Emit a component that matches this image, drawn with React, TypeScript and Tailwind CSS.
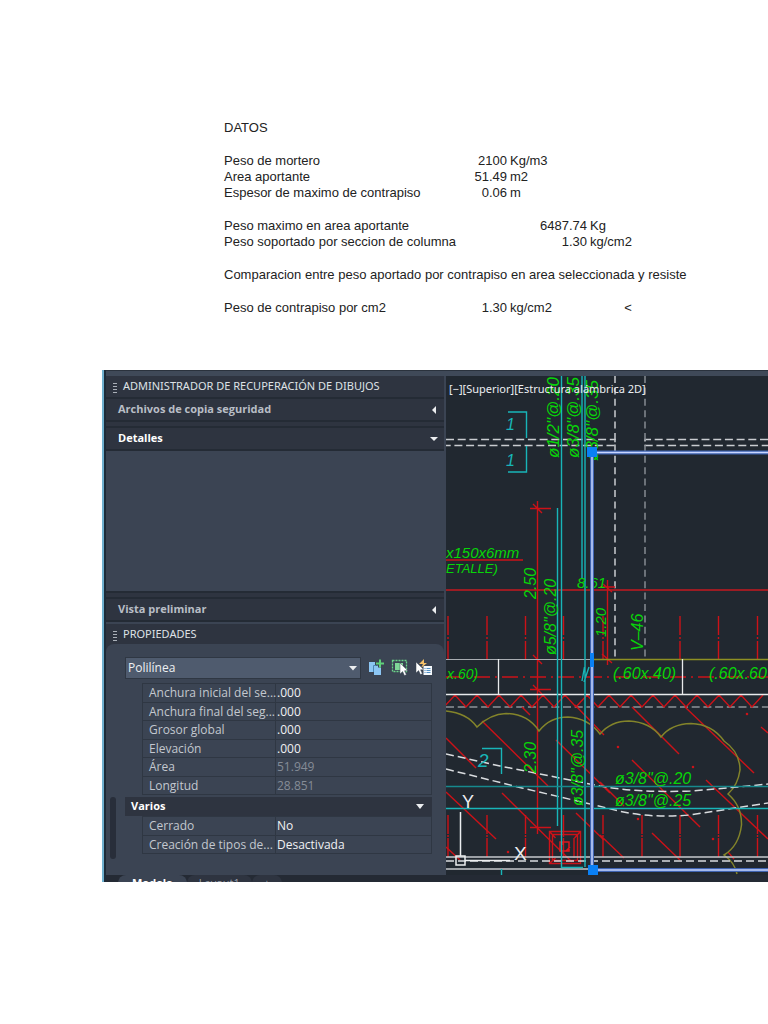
import type { ReactNode } from 'react';

type SheetRow = { label: string; a?: string; aUnit?: string; b?: string; bUnit?: string; wide?: boolean };

const sheet: (SheetRow | null)[] = [
    { label: 'DATOS' },
    null,
    { label: 'Peso de mortero', a: '2100', aUnit: 'Kg/m3' },
    { label: 'Area aportante', a: '51.49', aUnit: 'm2' },
    { label: 'Espesor de maximo de contrapiso', a: '0.06', aUnit: 'm' },
    null,
    { label: 'Peso maximo en area aportante', b: '6487.74', bUnit: 'Kg' },
    { label: 'Peso soportado por seccion de columna', b: '1.30', bUnit: 'kg/cm2' },
    null,
    { label: 'Comparacion entre peso aportado por contrapiso en area seleccionada y resiste', wide: true },
    null,
    { label: 'Peso de contrapiso por cm2', a: '1.30', aUnit: 'kg/cm2', bUnit: '<' },
];

const geometry = [
    { name: 'Anchura inicial del se...', value: '.000' },
    { name: 'Anchura final del seg...', value: '.000' },
    { name: 'Grosor global', value: '.000' },
    { name: 'Elevación', value: '.000' },
    { name: 'Área', value: '51.949', readOnly: true },
    { name: 'Longitud', value: '28.851', readOnly: true },
];

const misc = [
    { name: 'Cerrado', value: 'No' },
    { name: 'Creación de tipos de...', value: 'Desactivada' },
];

const Sheet = () => (
    <section className="pl-56 pr-[99px] pt-[120px] font-['Liberation_Sans',Arial,sans-serif] text-[13px] leading-4 text-[#222]">
        <table className="w-full table-fixed border-collapse whitespace-nowrap">
            <colgroup>
                <col />
                <col className="w-9" />
                <col className="w-20" />
                <col className="w-[82px]" />
            </colgroup>
            <tbody>
                {sheet.map((row, i) => {
                    if (!row) return <tr key={i} className="h-[17px]"><td colSpan={4} /></tr>;
                    if (row.wide) return <tr key={i}><td colSpan={4} className="p-0">{row.label}</td></tr>;
                    return (
                        <tr key={i}>
                            <td className="p-0">{row.label}</td>
                            <td className="p-0 text-right">{row.a}</td>
                            <td className="p-0">
                                <div className="flex justify-between pl-[3px]">
                                    <span>{row.aUnit}</span>
                                    <span>{row.b}</span>
                                </div>
                            </td>
                            <td className={row.bUnit === '<' ? 'p-0 text-center' : 'p-0 pl-[3px]'}>{row.bUnit}</td>
                        </tr>
                    );
                })}
            </tbody>
        </table>
    </section>
);

const PaletteTitle = ({ children }: { children: ReactNode }) => (
    <h2 className="flex h-5 items-center gap-1.5 bg-[#2e3440] pl-[7px] font-['Noto_Sans','Open_Sans',sans-serif] text-[11px] text-[#dfe2e6]">
        <svg width="4" height="10" stroke="#aab0b8" className="mt-1">
            <path d="M0 .5H4M0 3.5H4M0 6.5H4M0 9.5H4" />
        </svg>
        {children}
    </h2>
);

const Section = ({ title, open }: { title: string; open?: boolean }) => (
    <button
        type="button"
        aria-expanded={!!open}
        className={`flex h-[21px] w-full items-center justify-between bg-[#2e3440] pl-3 text-[11px] font-bold ${open ? 'pr-1.5 text-white' : 'pr-2 text-[#b9bec6]'}`}
    >
        {title}
        {open ? (
            <svg width="8" height="4" fill="#eceef0"><path d="M0 0h8L4 4z" /></svg>
        ) : (
            <svg width="4" height="8" fill="#eceef0"><path d="M4 0v8L0 4z" /></svg>
        )}
    </button>
);

const PropertyTable = ({ rows }: { rows: { name: string; value: string; readOnly?: boolean }[] }) => (
    <table className="w-full table-fixed border-collapse border border-[#2f3743] text-xs leading-4">
        <colgroup>
            <col className="w-[133px]" />
            <col />
        </colgroup>
        <tbody>
            {rows.map((r) => (
                <tr key={r.name} className="h-[18px] border-b border-[#2f3743] odd:h-[19px]">
                    <th className="whitespace-nowrap border-r border-[#2f3743] p-0 pl-1.5 text-left font-normal text-[#c3c8cf]">{r.name}</th>
                    <td className={r.readOnly ? 'p-0 pl-px text-[#858c97]' : 'p-0 pl-px text-[#f0f1f3]'}>{r.value}</td>
                </tr>
            ))}
        </tbody>
    </table>
);

const cursor = 'M0 0v11l2.6-2.4 1.8 4 2-.9-1.8-3.9H8z';

const Tools = () => (
    <div className="flex gap-1.5">
        <button type="button" aria-label="Alternar PICKADD">
            <svg width="18" height="18">
                <path d="M3 3h6v3h6v10H8v-3H3z" fill="#8cc6f4" />
                <path d="M7.5 13V6.5h4" fill="none" stroke="#4c87b5" />
                <path d="M14 .5v8M10 4.5h8" stroke="#3b4453" strokeWidth="4" />
                <path d="M14 .5v8M10 4.5h8" stroke="#5fd07b" strokeWidth="2" />
            </svg>
        </button>
        <button type="button" aria-label="Seleccionar objetos">
            <svg width="18" height="18">
                <rect x="2.5" y="1.5" width="14" height="11" fill="none" stroke="#6bd489" strokeWidth="1.3" strokeDasharray="2 1" />
                <path d="M5 4h8v7H5z" fill="#7fd697" />
                <path d={cursor} transform="translate(10 4)" fill="#fff" stroke="#3b4453" strokeWidth=".5" />
            </svg>
        </button>
        <button type="button" aria-label="Selección rápida">
            <svg width="18" height="18">
                <path d="M10 0 5 5h4l-2 4 6-5h-3z" fill="#f4c069" />
                <path d={cursor} transform="translate(2 3)" fill="#fff" stroke="#3b4453" strokeWidth=".5" />
                <path d="M9.500 7H18v9H9.500z" fill="#f5f8fb" />
                <path d="M10.500 9.500h1M12.500 9.500h4M10.500 11.500h1M12.500 11.500h4M10.500 13.500h1M12.500 13.500h4" stroke="#4f8fc4" />
            </svg>
        </button>
    </div>
);

const Palettes = () => (
    <aside className="flex w-[338px] shrink-0 flex-col font-['Open_Sans','Noto_Sans',sans-serif]">
        <div className="flex flex-col gap-0.5 bg-[#242b35] pb-0.5">
            <div className="bg-[#2e3440] pb-px"><PaletteTitle>ADMINISTRADOR DE RECUPERACIÓN DE DIBUJOS</PaletteTitle></div>
            <Section title="Archivos de copia seguridad" />
            <div className="h-1 bg-[#2e3440]" />
            <Section title="Detalles" open />
            <div className="h-[140px] bg-[#3b4453]" />
            <div className="h-1 bg-[#2e3440]" />
            <Section title="Vista preliminar" />
        </div>
        <div className="h-0.5 bg-[#3b4453]" />
        <PaletteTitle>PROPIEDADES</PaletteTitle>
        <div className="bg-[#2e3440]">
            <div className="flex h-[231px] items-end rounded-t-lg bg-[#3b4453] pb-4 pl-1">
                <div className="h-[62px] w-1.5 rounded bg-[#282e3a]" />
                <div className="flex h-full min-w-0 flex-1 flex-col pl-[9px] pr-3 pt-[13px]">
                    <div className="flex h-[22px] items-center justify-between">
                        <div className="relative">
                            <select aria-label="Tipo de objeto" className="block h-[22px] w-[236px] appearance-none border border-[#2f3743] bg-[#4f5b6e] px-0.5 text-xs text-[#eef0f2]">
                                <option>Polilínea</option>
                            </select>
                            <svg width="8" height="5" fill="#eceef0" className="pointer-events-none absolute right-1 top-[9px]"><path d="M0 0h8L4 4.5z" /></svg>
                        </div>
                        <Tools />
                    </div>
                    <div className="pl-[17px] pt-1"><PropertyTable rows={geometry} /></div>
                    <button type="button" aria-expanded="true" className="mt-0.5 flex h-[19px] w-full shrink-0 items-center justify-between bg-[#2e3440] pl-1.5 pr-2 text-[11px] font-bold text-white">
                        Varios
                        <svg width="8" height="5" fill="#eceef0"><path d="M0 0h8L4 5z" /></svg>
                    </button>
                    <div className="pl-[17px]"><PropertyTable rows={misc} /></div>
                </div>
            </div>
        </div>
    </aside>
);

type LabelProps = { x: number; y: number; size?: number; up?: boolean; children: ReactNode };

const Label = ({ x, y, size = 16, up, children }: LabelProps) => (
    <text x={x} y={y} fontSize={size} transform={up ? `rotate(-90 ${x} ${y})` : undefined}>{children}</text>
);

const rebarX = [448, 487, 525.5, 563.5, 603, 642, 680, 718.5, 757.5];

const hatch = [
    [446, 738, 476, 768], [482, 721, 548, 786], [556, 740, 610, 793], [446, 792, 496, 839], [502, 793, 572, 862],
    [576, 813, 604, 840], [446, 847, 460, 860], [522, 707, 530, 715], [575, 705, 604, 735], [632, 707, 679, 754],
    [685, 707, 754, 773], [600, 782, 624, 806], [632, 760, 700, 827], [600, 835, 624, 858], [652, 833, 680, 860],
    [706, 780, 768, 839], [761, 727, 768, 733], [728, 852, 734, 859],
];

const dots = [[618, 747], [693, 767], [747, 714], [713, 839], [638, 819], [508, 852]];

const zigzag = Array.from({ length: 30 }, (_, i) => `${444 + i * 11} ${i % 2 ? 695 : 707}`).join(' ');

const Drawing = () => (
    <svg
        viewBox="446 376 322 499"
        preserveAspectRatio="xMinYMin slice"
        className="block h-[499px] w-full bg-[#212830] font-['Liberation_Sans',Arial,sans-serif]"
        fill="none"
    >
        {/* beams and axes */}
        <g stroke="#c9ccd0" strokeWidth="1.5">
            <path d="M446 439.5H615V445.5H446M768 439.5H645V445.5H768" strokeDasharray="8 3.7" />
            <path d="M615 376V659" strokeDasharray="7 4.4" />
            <path d="M645 376V659" stroke="#858a91" strokeDasharray="7 4.4" />
            <path d="M446 707H768" stroke="#8d9298" strokeDasharray="8 3.7" />
        </g>

        {/* red hatch, rebar and dimensions */}
        <g stroke="#cc1218" strokeWidth="1.4">
            <path d="M446 590H768" stroke="#9c1c23" strokeWidth="2.2" />
            <path d="M446 560H523M537.5 501V834M530 508.5H551M530 689.5H551M530 827.5H551M533 504l9 9M533 685l9 9M533 655l9 9M607.5 580V665M602 654l10 9M600 587h15M603 584l9 8" />
            <path d="M446 677H768" strokeDasharray="16 5 2 5" />
            <polyline points={zigzag} />
            {rebarX.filter((x) => x !== 642).map((x) => (
                <path key={x} d={`M${x} 616V635M${x} 637V639M${x} 641V659`} />
            ))}
            {rebarX.map((x) => (
                <path key={x} d={`M${x} 815V834M${x} 835V837M${x} 838V857`} />
            ))}
            {hatch.map(([x1, y1, x2, y2], i) => (
                <line key={i} x1={x1} y1={y1} x2={x2} y2={y2} />
            ))}
            {dots.map(([x, y]) => <circle key={x} cx={x} cy={y} r=".6" />)}
            <path d="M549.5 831.5h31v32h-31zM552.5 834.5h25v26h-25zM549.5 831.5l6 6.5M580.5 831.5l-6 6.5M549.5 863.5l6-5.5M574 838v20" />
            <path d="M560 842h9v9h-9zM563 845v-3M566 851l4-4" strokeWidth="1.5" stroke="#e0161c" />
        </g>

        {/* slab edges */}
        <path d="M446 659.5H594" stroke="#a9adb2" />
        <path d="M594 659.5H768" stroke="#8f9023" strokeWidth="1.5" />
        <path d="M446 694.5H768M498.5 659V694M682.5 659V694" stroke="#e8eaec" strokeWidth="1.3" />
        <path
            d="M446 711Q467 713 477 727Q490 714 506 713.5Q528 714 539 731Q550 717 568 717Q588 718 600 734Q611 721 629 721Q650 722 661 737Q671 724 691 723.5Q712 724 724 741Q740 752 740 770Q738 785 728 794Q742 806 741.5 825Q739 846 724 855Q735 863 737 874"
            stroke="#83842a"
            strokeWidth="1.5"
        />
        <g stroke="#d9dcdf" strokeWidth="1.5" strokeDasharray="8 4">
            <path d="M446 754L500 766L600 786Q640 793 690 791Q740 787 768 784" />
            <path d="M446 769L522 788L607 808Q645 819 690 815Q735 808 768 803" />
            <path d="M446 861H768" />
        </g>
        <path d="M446 857H768M446 869H590" stroke="#c5c8cc" strokeWidth="1.5" />

        {/* cyan reinforcement */}
        <g stroke="#18b5b8" strokeWidth="1.4">
            <path d="M561.5 376V867.5H583M557.5 508V826M582 376V578M585 376V867M584.5 667L582 681M589 667L584 682" />
            <path d="M508 412H526.5V438M508 472H526.5V446M482 748.5H501.5V774M501.5 869V875" />
            <path d="M446 786.5H768" stroke="#17898d" strokeWidth="1.5" />
            <path d="M446 808.5H768" />
        </g>
        <g fill="#18b5b8" fontStyle="italic">
            <Label x={506} y={430}>1</Label>
            <Label x={506} y={466}>1</Label>
            <Label x={478} y={767} size={19}>2</Label>
        </g>

        {/* annotations */}
        <g fill="#08d508" fontStyle="italic">
            <Label x={559} y={458} size={17} up>ø1/2"@.20</Label>
            <Label x={579} y={458} size={17} up>ø3/8"@.35</Label>
            <Label x={598} y={461} size={17} up>ø3/8"@.35</Label>
            <Label x={556} y={655} up>ø5/8"@.20</Label>
            <Label x={583} y={806} up>ø3/8"@.35</Label>
            <Label x={536} y={599} up>2.50</Label>
            <Label x={536} y={773} up>2.30</Label>
            <Label x={606} y={637} size={15} up>1.20</Label>
            <Label x={643} y={651} up>V–46</Label>
            <Label x={577} y={588} size={15}>8.61</Label>
            <Label x={446} y={558} size={15}>x150x6mm</Label>
            <Label x={446} y={573} size={13}>ETALLE)</Label>
            <Label x={447} y={679} size={14}>x.60)</Label>
            <Label x={613} y={679}>(.60x.40)</Label>
            <Label x={709} y={679}>(.60x.60</Label>
            <Label x={615} y={784}>ø3/8"@.20</Label>
            <Label x={615} y={806}>ø3/8"@.25</Label>
        </g>

        {/* selected polyline with its grips */}
        <path d="M768 452.5H592V870H768" stroke="#3f63b0" strokeWidth="4" />
        <path d="M768 452.5H592V870H768" stroke="#c8d6ff" strokeWidth="1.5" />
        <path d="M587 447h10v10h-10zM588 865h10v10h-10zM590 653h4v14h-4z" fill="#0a80f5" />

        {/* UCS icon */}
        <path d="M460.5 812V856M456 856h9v9h-9zM465 860.5H510" stroke="#eceef0" strokeWidth="1.5" />
        <g fill="#eceef0">
            <Label x={462} y={808} size={18}>Y</Label>
            <Label x={514} y={860} size={19}>X</Label>
            <text x="449" y="393" fontSize="11" className="font-['Noto_Sans','Open_Sans',sans-serif]">[−][Superior][Estructura alámbrica 2D]</text>
        </g>
    </svg>
);

const LayoutTabs = () => (
    <nav className="flex h-[7px] items-start overflow-hidden bg-[#242a34] pl-3 font-['Open_Sans','Noto_Sans',sans-serif] text-[11px] leading-4 text-[#9aa0aa]">
        <button type="button" className="rounded-t-lg bg-[#3b4453] px-3.5 font-bold text-white">Modelo</button>
        <button type="button" className="rounded-t-lg bg-[#2e3440] px-3">Layout1</button>
        <button type="button" className="rounded-t-lg bg-[#2e3440] px-3" aria-label="Nueva presentación">+</button>
    </nav>
);

export default function App() {
    return (
        <main className="min-h-screen bg-white">
            <Sheet />
            <section className="ml-[102px] mt-[54px] border-l-2 border-[#6fb0cf] bg-[#242b35]">
                <div className="border-l-2 border-[#1d2b38]">
                    <div className="h-1.5 border-t border-[#2a323d] bg-[#3f4958]" />
                    <div className="flex">
                        <Palettes />
                        <div className="min-w-0 flex-1 border-l-2 border-[#3b4453]">
                            <Drawing />
                        </div>
                    </div>
                    <LayoutTabs />
                </div>
            </section>
        </main>
    );
}
